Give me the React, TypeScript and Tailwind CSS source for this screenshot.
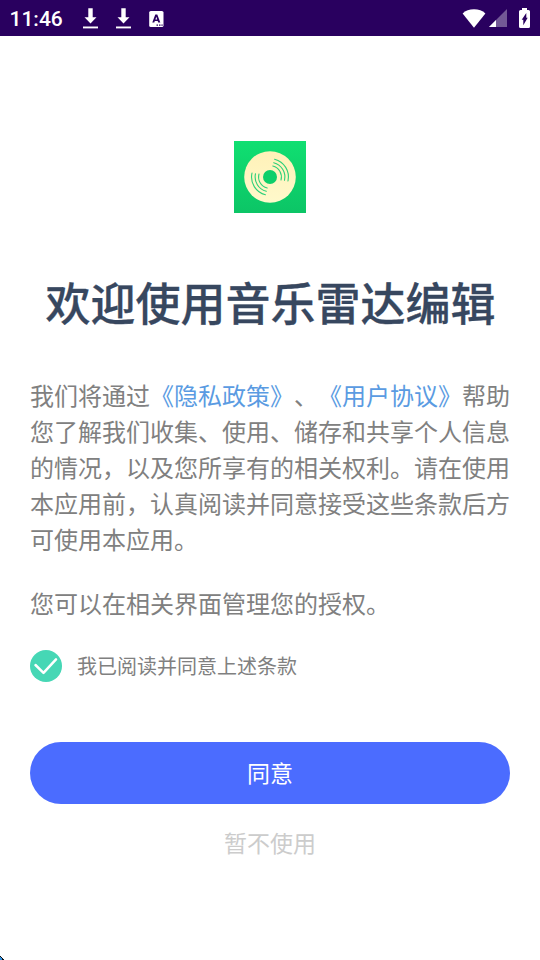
import React from 'react';

function DownloadIcon() {
  return (
    <svg width="15" height="21" viewBox="0 0 15 21" fill="#fff">
      <path d="M5.300 .3h4.400v8.900h3.800L7.500 15.600 1.500 9.200h3.800z" />
      <path d="M0 18.500h15v1.900H0z" />
    </svg>
  );
}

function KeyboardIcon() {
  return (
    <svg width="15" height="16" viewBox="0 0 15 16">
      <rect x=".2" width="14.300" height="16" rx="1.600" fill="#fff" />
      <path
        d="M6.300 3.500h2l3 8H9.200l-.5-1.500H5.800l-.5 1.500H3.300zM7.300 5.700l-.9 2.700h1.800z"
        fill="#29005f"
        fillRule="evenodd"
      />
      <path d="M7.500 13.500H9v1.300H7.500zM10 13.500h1.500v1.300H10zM12.400 13.500h1.300v1.300h-1.300z" fill="#29005f" />
    </svg>
  );
}

function StatusBar() {
  return (
    <header className="flex h-9 items-center bg-[#29005f] pl-[9.500px] pr-[10px] text-white">
      <span className="w-[73.500px] pt-[2px] font-[Roboto,sans-serif] text-[21px] font-medium leading-none">
        11:46
      </span>
      <div className="flex items-center gap-[18px] pt-px">
        <DownloadIcon />
        <DownloadIcon />
        <KeyboardIcon />
      </div>
      <div className="ml-auto flex items-center">
        <svg width="24" height="19" viewBox="0 0 24 19" fill="#fff">
          <path d="M0.600 4.500C3.500 1.700 7.400.3 12 .3s8.500 1.400 11.400 4.200L12 18.800z" />
        </svg>
        <svg className="ml-[3px]" width="18" height="18" viewBox="0 0 18 18" fill="#fff">
          <path d="M18 0v18H0z" opacity=".35" />
          <path d="M7 11v7H0z" />
        </svg>
        <svg className="ml-3" width="11" height="20" viewBox="0 0 11 20">
          <path d="M3 0h5v2h1.500Q11 2 11 3.500v15Q11 20 9.500 20h-8Q0 20 0 18.500v-15Q0 2 1.500 2H3z" fill="#fff" />
          <path d="M7.300 5v4.800h1.400L4.300 17.300v-5.500H2.700z" fill="#29005f" />
        </svg>
      </div>
    </header>
  );
}

function AppLogo() {
  return (
    <svg className="mx-auto block" width="72" height="72" viewBox="0 0 72 72">
      <defs>
        <linearGradient id="logoBg" x1="0" y1="0" x2="0" y2="1">
          <stop offset="0" stopColor="#10df71" />
          <stop offset="1" stopColor="#0cc566" />
        </linearGradient>
        <linearGradient id="disc" x1="0" y1="0" x2="0" y2="1">
          <stop offset="0" stopColor="#fff1b8" />
          <stop offset="1" stopColor="#fff9cb" />
        </linearGradient>
      </defs>
      <rect width="72" height="72" fill="url(#logoBg)" />
      <circle cx="36" cy="36" r="25.800" fill="url(#disc)" />
      <circle cx="36" cy="36" r="7" fill="#0ecf6a" />
      <g fill="none" stroke="#2bd079" strokeWidth="1.100" strokeLinecap="round">
        <path d="M38.800 25A11.300 11.300 0 0 1 47 39" />
        <path d="M39.700 21.700A14.800 14.800 0 0 1 50.500 39.300" />
        <path d="M40.600 18.200A18.400 18.400 0 0 1 54 40" />
        <path d="M33.200 47A11.300 11.300 0 0 1 25 33" />
        <path d="M32.300 50.300A14.800 14.800 0 0 1 21.500 32.700" />
        <path d="M31.400 53.800A18.400 18.400 0 0 1 18 32" />
      </g>
    </svg>
  );
}

export default function App() {
  const [agreed, setAgreed] = React.useState(true);

  return (
    <div className="relative h-[960px] w-[540px] overflow-hidden bg-white font-['Noto_Sans_CJK_SC',sans-serif] text-[#808080] [text-spacing-trim:space-all]">
      <StatusBar />

      <main className="px-[30px] pt-[105px]">
        <AppLogo />

        <h1 className="-mx-4 mt-[56px] pl-px text-center text-[45px] font-medium leading-[66px] text-[#37475f] [-webkit-text-stroke:0.3px_#37475f]">
          欢迎使用音乐雷达编辑
        </h1>

        <div className="mt-[42px] text-2xl leading-9">
          <p>
            我们将通过
            <a className="text-[#5a9be2]">《隐私政策》</a>、
            <a className="text-[#5a9be2]">《用户协议》</a>
            帮助您了解我们收集、使用、储存和共享个人信息的情况，以及您所享有的相关权利。请在使用本应用前，认真阅读并同意接受这些条款后方可使用本应用。
          </p>
          <p className="mt-7">您可以在相关界面管理您的授权。</p>
        </div>

        <button
          type="button"
          role="checkbox"
          aria-checked={agreed}
          onClick={() => setAgreed(!agreed)}
          className="mt-[29px] flex h-8 items-center gap-[15px] text-xl"
        >
          <svg width="32" height="32" viewBox="0 0 32 32">
            <circle cx="16" cy="16" r="16" fill={agreed ? '#46d7b5' : '#d0d0d0'} />
            <path
              d="M5.500 15l8 7.800L26 9.300"
              fill="none"
              stroke="#fff"
              strokeWidth="2.500"
              strokeLinecap="round"
              strokeLinejoin="round"
            />
          </svg>
          <span>我已阅读并同意上述条款</span>
        </button>

        <button
          type="button"
          className="mt-[60px] h-[62px] w-full rounded-[31px] bg-[#4b6cff] pb-[2px] text-[23px] text-white"
        >
          同意
        </button>
        <button type="button" className="mt-[21px] block w-full text-[23px] leading-[34px] text-[#cccccc]">
          暂不使用
        </button>
      </main>

      <svg className="absolute bottom-0 left-0" width="4" height="4" viewBox="0 0 4 4">
        <path d="M0 0h1v1h1v1h1v1h1v1H0z" fill="#111" />
        <path d="M0 1h1v1h1v2H0z" fill="#2f8fe0" />
      </svg>
    </div>
  );
}
